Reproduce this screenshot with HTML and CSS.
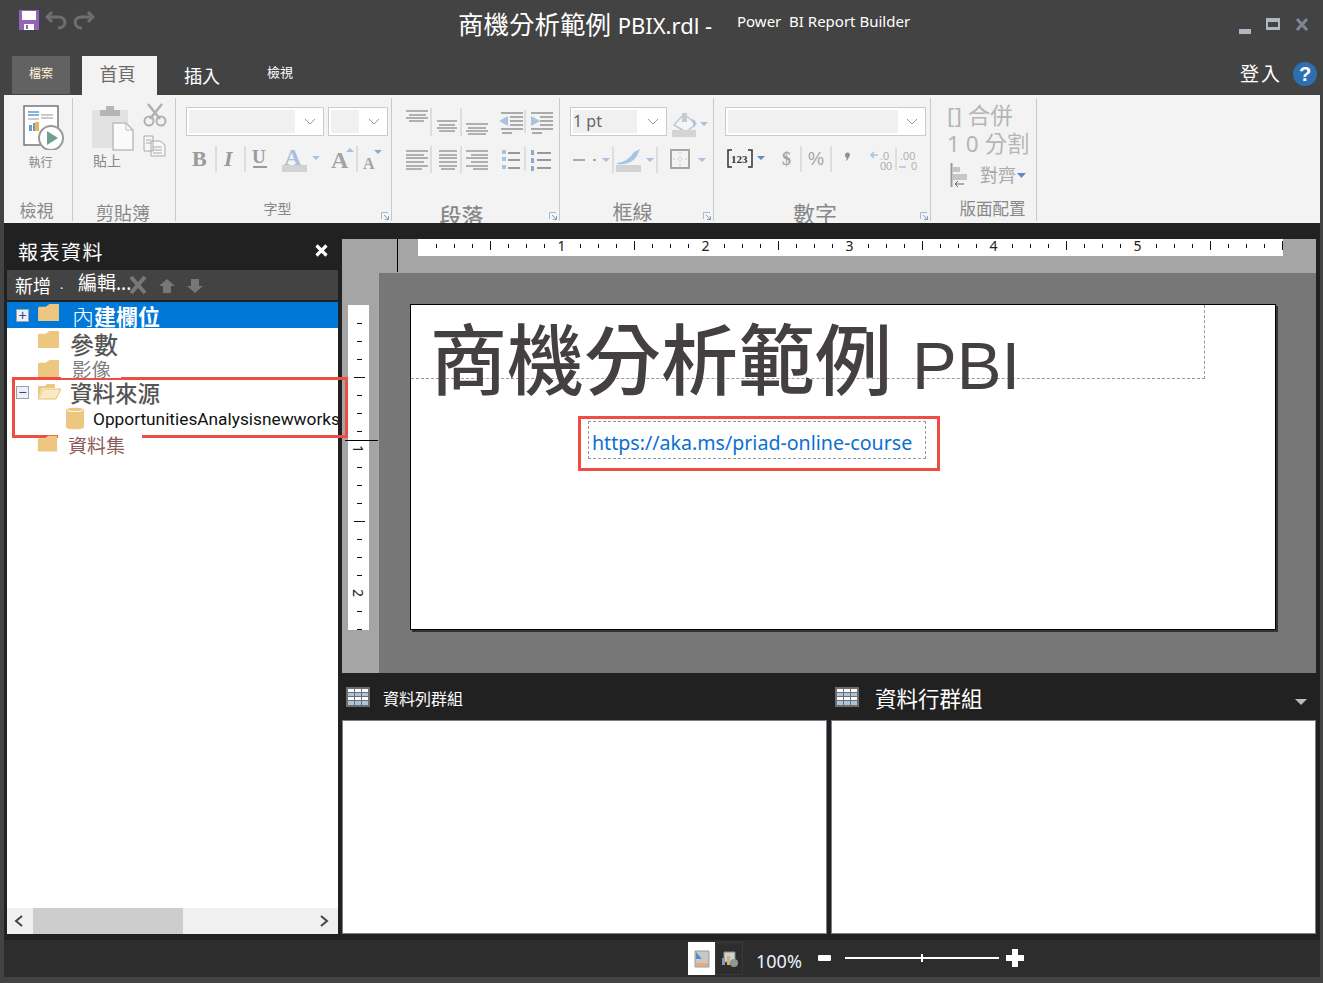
FILE: index.html
```html
<!DOCTYPE html>
<html lang="zh-Hant">
<head>
    <meta charset="UTF-8">
    <title>Power BI Report Builder</title>
    <link rel="stylesheet" href="styles.css">
</head>
<body>
<svg class="defs" width="0" height="0">
    <symbol id="folder" viewBox="0 0 24 20">
        <path d="M1 5 L1 19 L23 19 L23 1 L13 1 L9 4 L2 4 Z" fill="#edc680"/>
    </symbol>
    <symbol id="launcher" viewBox="0 0 8 8">
        <path d="M0.5 7 V0.5 H7" fill="none" stroke="#a9b9cc"/>
        <path d="M3 3 L7.5 7.5 M7.5 4 V7.5 H4" fill="none" stroke="#7f9fc4"/>
    </symbol>
    <symbol id="table" viewBox="0 0 24 20">
        <rect width="24" height="20" fill="#6d6d6d"/>
        <path d="M2 2h6v3H2zM9 2h6v3H9zM16 2h6v3h-6zM2 10h6v3H2zM9 10h6v3H9zM16 10h6v3h-6z" fill="#fff"/>
        <path d="M2 6h6v3H2zM9 6h6v3H9zM16 6h6v3h-6zM2 14h6v4H2zM9 14h6v4H9zM16 14h6v4h-6z" fill="#a9c6e0"/>
    </symbol>
</svg>
<div class="app">
    <header class="titlebar">
        <div class="quick">
            <svg width="20" height="20" viewBox="0 0 20 20"><path d="M0 0H20V20H0Z" fill="#9563b5"/><path d="M3 1H17V10H3Z" fill="#fff"/><path d="M5 14H15V20H5Z" fill="#fff"/><path d="M7 15H9V19H7Z" fill="#9563b5"/></svg>
            <svg width="22" height="20" viewBox="0 0 22 20"><path d="M7 2 L2 7 L7 12 M2 7 H14 C22 7 22 18 13 18" fill="none" stroke="#6e6e6e" stroke-width="3"/></svg>
            <svg width="22" height="20" viewBox="0 0 22 20"><path d="M15 2 L20 7 L15 12 M20 7 H8 C0 7 0 18 9 18" fill="none" stroke="#6e6e6e" stroke-width="3"/></svg>
        </div>
        <div class="title"><span class="doc-name">商機分析範例 <span class="doc-latin">PBIX.rdl -</span></span><span class="app-name">Power&nbsp; BI Report Builder</span></div>
        <div class="win-btns">
            <span class="win-min"></span>
            <span class="win-max"></span>
            <svg width="14" height="13" viewBox="0 0 14 13"><path d="M2 1 L12 12 M12 1 L2 12" stroke="#7d8794" stroke-width="3"/></svg>
        </div>
    </header>
    <nav class="tabs">
        <a class="tab tab-file">檔案</a>
        <a class="tab tab-home">首頁</a>
        <a class="tab tab-insert">插入</a>
        <a class="tab tab-view">檢視</a>
        <span class="signin">登入</span>
        <span class="help">?</span>
    </nav>
    <section class="ribbon">
        <div class="group g-view">
            <svg class="run-icon" width="46" height="46" viewBox="23 104 46 46">
                <rect x="24" y="106" width="34" height="39" fill="#fff" stroke="#777" stroke-width="1.500"/>
                <path d="M28 112H39M28 115H39" stroke="#5b9bd5" stroke-width="1.500"/>
                <path d="M41 115H53M41 118H53M28 119H39" stroke="#bbb" stroke-width="1.500"/>
                <path d="M29 131V125H32V131ZM33 131V123H36V131Z" fill="#6f9bc8"/>
                <path d="M35 131V122H39V131Z" fill="#e5b660"/>
                <circle cx="51" cy="138" r="12" fill="#fff" stroke="#9a9a9a" stroke-width="2"/>
                <path d="M47 131 L58 138 L47 145 Z" fill="#6fa08f"/>
            </svg>
            <span class="cmd-text">執行</span>
            <span class="group-label label-view">檢視</span>
        </div>
        <div class="group g-clip">
            <svg class="clip-icons" width="102" height="62" viewBox="73 100 102 62">
                <path d="M92 110H128V148H92Z" fill="#e2e2e2"/>
                <path d="M100 110H120V116H100ZM106 106H114V110H106Z" fill="#b5b5b5"/>
                <path d="M113 123H126L133 130V150H113Z" fill="#fafafa" stroke="#bdbdbd" stroke-width="1.500"/>
                <path d="M126 123V130H133" fill="none" stroke="#bdbdbd"/>
                <path d="M148 104 L160 119 M162 104 L150 119" stroke="#b0b0b0" stroke-width="2.500"/>
                <circle cx="149" cy="121" r="4.500" fill="none" stroke="#b0b0b0" stroke-width="2"/>
                <circle cx="161" cy="121" r="4.500" fill="none" stroke="#b0b0b0" stroke-width="2"/>
                <path d="M144 136H153V151H144ZM151 141H160L165 145V156H151Z" fill="#f7f7f7" stroke="#aaa"/>
                <path d="M146 140H151M146 143H151M153 147H162M153 150H162M153 153H162" stroke="#aaa"/>
            </svg>
            <span class="cmd-text paste-text">貼上</span>
            <span class="group-label label-clip">剪貼簿</span>
        </div>
        <div class="group g-font">
            <div class="combo-row">
                <div class="combo combo-font"><div class="combo-fill"></div><svg class="chev" width="12" height="7" viewBox="0 0 12 7"><path d="M1 1 L6 6 L11 1" fill="none" stroke="#999"/></svg></div>
                <div class="combo combo-size"><div class="combo-fill"></div><svg class="chev" width="12" height="7" viewBox="0 0 12 7"><path d="M1 1 L6 6 L11 1" fill="none" stroke="#999"/></svg></div>
            </div>
            <svg class="icon-row" width="215" height="32" viewBox="176 143 215 32">
                <text x="192" y="166" class="ico-serif" font-size="22" fill="#9a9a9a">B</text>
                <path d="M216 146V172M245 146V172M357 146V172" stroke="#c8c8c8"/>
                <text x="224" y="166" class="ico-serif ico-italic" font-size="22" fill="#9a9a9a">I</text>
                <text x="252" y="163" class="ico-serif" font-size="19" fill="#9a9a9a">U</text>
                <path d="M253 167H267" stroke="#9a9a9a" stroke-width="2"/>
                <text x="284" y="165" class="ico-serif" font-size="24" fill="#a9bfdc">A</text>
                <path d="M282 165H307V172H282Z" fill="#d2d2d2"/>
                <path d="M312 156H320L316 160Z" fill="#a9c0df"/>
                <text x="331" y="168" class="ico-serif" font-size="24" fill="#a3a3a3">A</text>
                <path d="M346 152L350 148L354 152Z" fill="#a9c0df"/>
                <text x="363" y="169" class="ico-serif" font-size="16" fill="#a3a3a3">A</text>
                <path d="M374 150H382L378 154Z" fill="#8da9d0"/>
            </svg>
            <span class="group-label label-font">字型</span>
            <svg class="launcher" width="8" height="8"><use href="#launcher"/></svg>
        </div>
        <div class="group g-para">
            <svg class="icon-row para-icons" width="167" height="76" viewBox="392 103 167 76" stroke="#b0b0b0" stroke-width="2">
                <path d="M406 111H428M409 115H426M406 118H428M409 121H424"/>
                <path d="M437 121H457M439 125H455M437 128H457M439 131H455"/>
                <path d="M466 124H488M468 128H486M466 131H488M468 134H486"/>
                <path d="M431 108V136M461 108V136M525 110V133" stroke="#c8c8c8" stroke-width="1"/>
                <path d="M501 113H523M510 117H523M510 121H523M510 125H523M501 129H523M502 133H512" stroke="#aaa"/>
                <path d="M508 117 L501 121 L508 125" fill="#a9c3e3" stroke="#a9c3e3"/>
                <path d="M531 113H553M540 117H553M540 121H553M540 125H553M531 129H553M532 133H542" stroke="#aaa"/>
                <path d="M531 117 L538 121 L531 125" fill="#a9c3e3" stroke="#a9c3e3"/>
                <path d="M406 151H428M406 155H424M406 158H428M406 162H424M406 166H428M406 169H422"/>
                <path d="M439 151H457M439 155H457M439 158H457M439 162H457M439 166H457M441 169H455"/>
                <path d="M466 151H488M471 155H488M466 158H488M471 162H488M466 166H488M473 169H488"/>
                <path d="M431 146V173M461 146V173M525 147V171" stroke="#c8c8c8" stroke-width="1"/>
                <path d="M508 153H520M508 160H520M508 168H520" stroke="#999"/>
                <path d="M502 150h4v4h-4zM502 157h4v4h-4zM502 165h4v4h-4z" fill="#a9c3e3" stroke="none"/>
                <path d="M537 153H551M537 160H551M537 168H551" stroke="#999"/>
                <path d="M531 150h3v5h-3zM531 158h3v5h-3zM531 166h3v5h-3z" fill="#8da9d0" stroke="none"/>
            </svg>
            <span class="group-label label-para">段落</span>
            <svg class="launcher" width="8" height="8"><use href="#launcher"/></svg>
        </div>
        <div class="group g-border">
            <div class="combo-row">
                <div class="combo combo-pt"><div class="combo-fill pt-fill">1 pt</div><svg class="chev" width="12" height="7" viewBox="0 0 12 7"><path d="M1 1 L6 6 L11 1" fill="none" stroke="#999"/></svg></div>
                <svg width="40" height="30" viewBox="668 105 40 30">
                    <path d="M672 123 L682 112 L694 122 L684 130 Z" fill="#f5f5f5" stroke="#bcc9da" stroke-width="1.500"/>
                    <path d="M680 111H685V120H680Z" fill="#c9c9c9"/>
                    <path d="M690 117 Q696 118 692 126 Z" fill="#a9c3e3"/>
                    <path d="M668 128H692V135H668Z" fill="#d4d4d4" transform="translate(2 0)"/>
                    <path d="M698 120H706L702 124Z" fill="#a9c0df"/>
                </svg>
            </div>
            <svg class="icon-row" width="153" height="38" viewBox="560 142 153 38">
                <path d="M573 160H585" stroke="#aaa" stroke-width="2"/>
                <path d="M593 160H596" stroke="#aaa" stroke-width="2"/>
                <path d="M602 158H610L606 162Z" fill="#a9c0df"/>
                <path d="M613 147V173M657 147V173" stroke="#c8c8c8"/>
                <path d="M617 163 Q628 162 634 152 L640 149 L637 156 Q630 166 617 164 Z" fill="#a9c3e3"/>
                <path d="M616 165H641V172H616Z" fill="#d2d2d2"/>
                <path d="M646 158H654L650 162Z" fill="#a9c0df"/>
                <rect x="671" y="150" width="18" height="18" fill="none" stroke="#a5a5a5" stroke-width="2"/>
                <path d="M680 152V167M673 159H688" stroke="#ccc" stroke-dasharray="2 2"/>
                <path d="M698 158H706L702 162Z" fill="#a9c0df"/>
            </svg>
            <span class="group-label label-border">框線</span>
            <svg class="launcher" width="8" height="8"><use href="#launcher"/></svg>
        </div>
        <div class="group g-num">
            <div class="combo-row">
                <div class="combo combo-num"><div class="combo-fill"></div><svg class="chev" width="12" height="7" viewBox="0 0 12 7"><path d="M1 1 L6 6 L11 1" fill="none" stroke="#999"/></svg></div>
            </div>
            <svg class="icon-row" width="216" height="32" viewBox="714 143 216 32">
                <path d="M732 150H728V167H732M748 150H752V167H748" fill="none" stroke="#333" stroke-width="1.500"/>
                <text x="731" y="163" class="ico-serif" font-size="11" fill="#333">123</text>
                <path d="M757 156H765L761 160Z" fill="#5f8cc4"/>
                <text x="782" y="165" class="ico-serif" font-size="18" fill="#a3a3a3">$</text>
                <path d="M801 146V172M831 146V172M896 148V170" stroke="#c8c8c8"/>
                <text x="808" y="165" class="ico-sans" font-size="18" fill="#a3a3a3">%</text>
                <path d="M845 155a2.500 2.500 0 1 1 4 2 q-1 3 -3.500 4 q1.500 -2 1 -3.500 q-1.500 0 -1.500 -2.500Z" fill="#8f8f8f"/>
                <path d="M871 155H878M874 152L871 155L874 158" fill="none" stroke="#a9c3e3" stroke-width="1.500"/>
                <text x="880" y="160" class="ico-sans" font-size="11" fill="#b0b0b0">.0</text>
                <text x="880" y="170" class="ico-sans" font-size="11" fill="#b0b0b0">00</text>
                <text x="900" y="160" class="ico-sans" font-size="11" fill="#b0b0b0">.00</text>
                <text x="911" y="170" class="ico-sans" font-size="11" fill="#b0b0b0">0</text>
                <path d="M899 167H906" stroke="#a9c3e3" stroke-width="1.500"/>
            </svg>
            <span class="group-label label-num">數字</span>
            <svg class="launcher" width="8" height="8"><use href="#launcher"/></svg>
        </div>
        <div class="group g-layout">
            <span class="layout-line line-merge">[] 合併</span>
            <span class="layout-line line-split">1 0 分割</span>
            <div class="layout-align">
                <svg width="18" height="26" viewBox="0 0 18 26"><path d="M1.500 1V25" stroke="#999" stroke-width="2"/><path d="M3 5H10V10H3ZM3 12H17V18H3Z" fill="#c6c6c6"/><path d="M14 22H5M8 19L5 22L8 25" fill="none" stroke="#666"/></svg>
                <span>對齊</span>
                <svg width="9" height="5" viewBox="0 0 9 5"><path d="M0 0H9L4.500 5Z" fill="#5f8cc4"/></svg>
            </div>
            <span class="group-label label-layout">版面配置</span>
        </div>
    </section>
    <main class="workspace">
        <aside class="report-data">
            <div class="pane-head">
                <span>報表資料</span>
                <svg width="13" height="13" viewBox="0 0 13 13"><path d="M1.500 1.500 L11.500 11.500 M11.500 1.500 L1.500 11.500" stroke="#fff" stroke-width="3.200"/></svg>
            </div>
            <div class="pane-tools">
                <span class="tool-new">新增</span><span class="tool-dot">.</span>
                <span class="tool-edit">編輯...</span>
                <svg width="20" height="20" viewBox="0 0 20 20"><path d="M3 2 L17 18 M17 2 L3 18" stroke="#787878" stroke-width="4"/></svg>
                <svg class="tool-up" width="16" height="15" viewBox="0 0 16 15"><path d="M8 1 L16 8 H12 V15 H4 V8 H0 Z" fill="#777"/></svg>
                <svg class="tool-down" width="16" height="15" viewBox="0 0 16 15"><path d="M8 15 L16 8 H12 V1 H4 V8 H0 Z" fill="#777"/></svg>
            </div>
            <div class="tree">
                <div class="row row-builtin">
                    <span class="toggle">+</span>
                    <svg class="folder" width="23" height="19"><use href="#folder"/></svg>
                    <span class="row-text"><span class="thin">內</span>建欄位</span>
                </div>
                <div class="row row-param">
                    <svg class="folder" width="23" height="19"><use href="#folder"/></svg>
                    <span class="row-text">參數</span>
                </div>
                <div class="row row-image">
                    <svg class="folder" width="23" height="19"><use href="#folder"/></svg>
                    <span class="row-text">影像</span>
                </div>
                <div class="row row-source">
                    <span class="toggle">−</span>
                    <svg class="folder" width="24" height="17" viewBox="0 0 24 17"><path d="M1 3H8L10 1H18V5H5L1 15Z" fill="#edc680"/><path d="M1 16L6 6H24L19 16Z" fill="#fbe9c4" stroke="#e8c27c"/></svg>
                    <span class="row-text">資料來源</span>
                </div>
                <div class="row row-conn">
                    <svg width="18" height="23" viewBox="0 0 18 23"><path d="M0 3C0 0 18 0 18 3V20C18 23 0 23 0 20Z" fill="#edc680"/><path d="M1 3C3 5 15 5 17 3" fill="none" stroke="#fff"/></svg>
                    <span class="row-text">OpportunitiesAnalysisnewworkspace</span>
                </div>
                <div class="row row-set">
                    <svg class="folder" width="21" height="19"><use href="#folder"/></svg>
                    <span class="row-text">資料集</span>
                </div>
            </div>
            <div class="hscroll">
                <svg width="10" height="12" viewBox="0 0 10 12"><path d="M8 1 L2 6 L8 11" fill="none" stroke="#444" stroke-width="2"/></svg>
                <div class="thumb"></div>
                <svg class="hscroll-right" width="10" height="12" viewBox="0 0 10 12"><path d="M2 1 L8 6 L2 11" fill="none" stroke="#444" stroke-width="2"/></svg>
            </div>
        </aside>
        <div class="design">
            <div class="designer">
                <div class="corner"></div>
                <div class="hruler-wrap">
                    <div class="hruler">
                        <span>1</span><span>2</span><span>3</span><span>4</span><span>5</span>
                    </div>
                </div>
                <div class="vruler-wrap">
                    <div class="vruler">
                        <span>1</span><span>2</span>
                    </div>
                </div>
                <div class="canvas">
                    <div class="page">
                        <div class="report-title">商機分析範例 <span class="title-latin">PBI</span></div>
                        <div class="report-link">https://aka.ms/priad-online-course</div>
                        <div class="callout callout-link"></div>
                    </div>
                </div>
                <div class="guide guide-v"></div>
                <div class="guide guide-h"></div>
            </div>
            <div class="group-heads">
                <div class="group-head head-row">
                    <svg width="24" height="20"><use href="#table"/></svg>
                    <span>資料列群組</span>
                </div>
                <div class="group-head head-col">
                    <svg width="24" height="20"><use href="#table"/></svg>
                    <span>資料行群組</span>
                    <svg class="head-arrow" width="12" height="6" viewBox="0 0 12 6"><path d="M0 0H12L6 6Z" fill="#bbb"/></svg>
                </div>
            </div>
            <div class="group-panels">
                <div class="group-panel panel-row"></div>
                <div class="group-panel"></div>
            </div>
        </div>
        <div class="callout callout-tree"></div>
    </main>
    <footer class="statusbar">
        <div class="view-btn view-on">
            <svg width="16" height="18" viewBox="0 0 16 18"><path d="M1 1H15V17H1Z" fill="#c8c8c8" stroke="#999"/><path d="M2 2L8 9H2Z" fill="#4f90d0"/><path d="M2 13H14V16H2Z" fill="#eda96c"/></svg>
        </div>
        <div class="view-btn">
            <svg width="17" height="16" viewBox="0 0 17 16"><path d="M3 1H14V11H3Z" fill="#d0d0d0" stroke="#888"/><path d="M1 7H4V14H1Z" fill="#7a9cc6"/><path d="M6 5H9V14H6Z" fill="#d7b06c"/><circle cx="13" cy="12" r="4" fill="#8a9a92"/></svg>
        </div>
        <span class="zoom-val">100%</span>
        <span class="zoom-minus"></span>
        <div class="zoom-track"><span class="zoom-tick"></span></div>
        <svg class="zoom-plus" width="18" height="18" viewBox="0 0 18 18"><path d="M6 0H12V6H18V12H12V18H6V12H0V6H6Z" fill="#fff"/></svg>
    </footer>
</div>
</body>
</html>
```

FILE: styles.css
```css
* {
    box-sizing: border-box;
}
body {
    margin: 0;
    font-family: 'Noto Sans', 'Noto Sans CJK TC', sans-serif;
    background-color: #434343;
    overflow: hidden;
}
.defs {
    position: absolute;
}
svg {
    display: block;
    flex: none;
}
.app {
    width: 1323px;
    height: 983px;
    display: flex;
    flex-direction: column;
    background-color: #434343;
}

/* title bar */
.titlebar {
    height: 56px;
    display: flex;
    align-items: flex-start;
}
.quick {
    display: flex;
    gap: 6px;
    padding: 10px 0 0 19px;
    width: 458px;
}
.title {
    display: flex;
    color: #fff;
    white-space: nowrap;
}
.doc-name {
    font-size: 25.500px;
    line-height: 48px;
    width: 279px;
}
.doc-latin {
    font-size: 22px;
}
.app-name {
    font-size: 15px;
    line-height: 42px;
}
.win-btns {
    margin-left: auto;
    display: flex;
    gap: 15px;
    padding: 18px 14px 0 0;
}
.win-min {
    width: 12px;
    height: 5px;
    margin-top: 11px;
    background-color: #aeb8c5;
}
.win-max {
    width: 14px;
    height: 12px;
    border: 2px solid #aeb8c5;
    border-top-width: 4px;
    border-bottom-width: 3px;
    background-color: #434343;
}

/* tabs */
.tabs {
    height: 39px;
    display: flex;
    align-items: flex-start;
    padding-left: 12px;
    color: #fff;
}
.tab {
    display: block;
    text-align: center;
}
.tab-file {
    width: 58px;
    height: 38px;
    background-color: #626262;
    color: #fff3d8;
    font-size: 12px;
    line-height: 36px;
}
.tab-home {
    width: 75px;
    height: 39px;
    margin-left: 12px;
    padding-right: 4px;
    background-color: #f3f3f3;
    color: #6b6b6b;
    font-size: 18px;
    line-height: 37px;
}
.tab-insert {
    width: 60px;
    margin-left: 15px;
    font-size: 18px;
    line-height: 40px;
}
.tab-view {
    width: 40px;
    margin-left: 28px;
    font-size: 13px;
    line-height: 32px;
}
.signin {
    margin-left: auto;
    font-size: 19px;
    letter-spacing: 2px;
    line-height: 36px;
}
.help {
    width: 24px;
    height: 24px;
    margin: 6px 6px 0 11px;
    border-radius: 50%;
    background-color: #2e6fb0;
    font: bold 20px/24px 'Liberation Sans', sans-serif;
    text-align: center;
}

/* ribbon */
.ribbon {
    height: 128px;
    margin: 0 3px 0 4px;
    display: flex;
    background-color: #f3f3f3;
}
.group {
    position: relative;
    display: flex;
    flex-direction: column;
    height: 123px;
    margin-top: 3px;
    border-right: 1px solid #c9c9c9;
    color: #888;
}
.g-view { width: 69px; }
.g-clip { width: 103px; }
.g-font { width: 216px; }
.g-para { width: 168px; }
.g-border { width: 154px; }
.g-num { width: 217px; }
.g-layout { width: 106px; }
.group-label {
    position: absolute;
    left: 0;
    right: 0;
    text-align: center;
    white-space: nowrap;
}
.label-view { font-size: 17px; bottom: -1px; padding-right: 3px; }
.label-clip { font-size: 18px; bottom: -4px; padding-right: 2px; }
.label-font { font-size: 14px; bottom: 3px; padding-right: 12px; }
.label-para { font-size: 22px; bottom: -9px; font-weight: 500; padding-right: 28px; }
.label-border { font-size: 20px; bottom: -5px; padding-right: 8px; }
.label-num { font-size: 22px; bottom: -7px; padding-right: 14px; }
.label-layout { font-size: 16.500px; bottom: 1px; padding-left: 18px; }
.launcher {
    position: absolute;
    right: 2px;
    bottom: 1px;
}
.run-icon {
    margin: 6px 0 0 19px;
}
.cmd-text {
    font-size: 12px;
    text-align: center;
    padding-left: 5px;
    margin-top: 3px;
}
.clip-icons {
    margin-top: 2px;
}
.paste-text {
    font-size: 14px;
    text-align: left;
    padding-left: 20px;
    margin-top: -12px;
}
.combo-row {
    display: flex;
    gap: 4px;
    padding: 9px 0 0 10px;
}
.combo {
    height: 29px;
    display: flex;
    align-items: center;
    justify-content: space-between;
    padding: 2px 7px 2px 2px;
    background-color: #fff;
    border: 1px solid #cbcbcb;
}
.combo-fill {
    height: 23px;
    background-color: #f0f0f0;
}
.combo-font { width: 138px; }
.combo-font .combo-fill { width: 106px; }
.combo-size { width: 60px; }
.combo-size .combo-fill { width: 28px; }
.combo-pt { width: 97px; }
.combo-pt .combo-fill {
    width: 64px;
    color: #666;
    font-size: 16px;
    line-height: 23px;
}
.g-border .combo-row {
    align-items: flex-start;
    gap: 3px;
}
.combo-num { width: 201px; }
.combo-num .combo-fill { width: 170px; }
.g-num .combo-row { padding-left: 11px; }
.icon-row {
    margin-top: 7px;
}
.para-icons {
    margin-top: 5px;
}
.g-border .icon-row {
    margin-top: 5px;
}
.ico-serif {
    font-family: 'Liberation Serif', serif;
    font-weight: bold;
}
.ico-italic {
    font-style: italic;
}
.ico-sans {
    font-family: 'Liberation Sans', sans-serif;
}
.layout-line {
    padding-left: 16px;
    color: #b5b5b5;
    font-size: 22.500px;
    line-height: 28px;
    white-space: nowrap;
}
.line-merge {
    margin-top: 4px;
}
.layout-align {
    display: flex;
    align-items: center;
    gap: 12px;
    padding: 4px 0 0 19px;
    color: #aaa;
    font-size: 18px;
    line-height: 22px;
}
.layout-align span {
    margin-right: -11px;
}

/* workspace */
.workspace {
    position: relative;
    flex: 1;
    display: flex;
    margin: 0 3px 0 4px;
    padding-left: 3px;
    background-color: #212121;
}
.report-data {
    width: 331px;
    display: flex;
    flex-direction: column;
    padding-bottom: 6px;
}
.pane-head {
    height: 47px;
    display: flex;
    justify-content: space-between;
    padding: 16px 10px 0 11px;
    color: #fff;
    font-size: 20px;
    letter-spacing: 1.500px;
    line-height: 28px;
}
.pane-head svg {
    margin-top: 5px;
}
.pane-tools {
    height: 30px;
    display: flex;
    align-items: center;
    padding-left: 8px;
    background-color: #434343;
    color: #fff;
    font-size: 18px;
    line-height: 24px;
    white-space: nowrap;
}
.tool-new {
    margin-top: 1px;
}
.tool-dot {
    width: 27px;
    padding-left: 9px;
    font-size: 12px;
}
.tool-edit {
    margin-top: -4px;
    font-size: 19px;
    width: 50px;
}
.tool-up {
    margin-left: 11px;
}
.tool-down {
    margin-left: 12px;
}
.tree {
    flex: 1;
    margin-top: 2px;
    background-color: #fff;
    overflow: hidden;
}
.row {
    display: flex;
    align-items: center;
    white-space: nowrap;
}
.toggle {
    width: 13px;
    height: 13px;
    margin-left: 9px;
    border: 1px solid #9aa2ad;
    background-color: #eef0f4;
    color: #234b88;
    font: 14px/10px 'Liberation Sans', sans-serif;
    text-align: center;
}
.row-builtin {
    height: 26px;
    background-color: #0078d7;
    color: #fff;
    font-size: 22px;
    font-weight: 700;
    line-height: 24px;
}
.row-builtin .folder {
    margin: -6px 0 0 8px;
}
.row-builtin .row-text {
    margin: 2px 0 0 12px;
}
.thin {
    font-weight: 300;
}
.row-param {
    height: 30px;
    padding-left: 30px;
    color: #555;
    font-size: 24px;
    font-weight: 500;
    line-height: 26px;
}
.row-param .folder {
    margin-top: -8px;
}
.row-param .row-text {
    margin: 4px 0 0 10px;
}
.row-image {
    position: relative;
    z-index: 1;
    height: 21px;
    padding-left: 30px;
    color: #808080;
    font-size: 19.500px;
}
.row-image .row-text {
    height: 19px;
    margin-left: 1px;
    padding: 0 10px 0 11px;
    background-color: #fff;
    line-height: 21px;
}
.row-source {
    height: 27px;
    color: #555;
    font-size: 22.500px;
    font-weight: 500;
    line-height: 25px;
}
.row-source .folder {
    margin: -3px 0 0 8px;
}
.row-source .row-text {
    margin: 2px 0 0 9px;
}
.row-conn {
    height: 25px;
    padding-left: 59px;
    color: #111;
    font-family: 'Roboto', sans-serif;
    font-size: 17.300px;
    line-height: 22px;
}
.row-conn .row-text {
    margin-left: 9px;
}
.row-set {
    position: relative;
    z-index: 1;
    height: 24px;
    margin-top: 3px;
    padding-left: 30px;
    color: #8a5a5a;
    font-size: 19px;
}
.row-set .folder {
    margin-top: -6px;
}
.row-set .row-text {
    padding: 0 17px 0 10px;
    background-color: #fff;
    line-height: 24px;
}
.hscroll {
    height: 26px;
    display: flex;
    align-items: center;
    padding-left: 7px;
    background-color: #f0f0f0;
}
.thumb {
    width: 150px;
    height: 100%;
    margin-left: 9px;
    background-color: #cdcdcd;
}
.hscroll-right {
    margin-left: auto;
    margin-right: 9px;
}

/* design surface */
.design {
    width: 974px;
    margin-left: 4px;
    padding: 16px 0 6px;
    display: flex;
    flex-direction: column;
}
.designer {
    position: relative;
    height: 434px;
    display: grid;
    grid-template-columns: 37px 1fr;
    grid-template-rows: 34px 1fr;
    background-color: #a5a5a5;
}
.hruler-wrap {
    padding-left: 39px;
}
.hruler {
    width: 865px;
    height: 17px;
    display: flex;
    padding-left: 139px;
    gap: 135px;
    font: 14px/13px 'Noto Sans', sans-serif;
    color: #222;
    background-color: #fff;
    background-image:
        repeating-linear-gradient(90deg, transparent 0 71px, #111 71px 72px),
        repeating-linear-gradient(90deg, transparent 0 17px, #111 17px 18px);
    background-size: 865px 9px, 865px 4px;
    background-position: 1px 2px, 1px 5px;
    background-repeat: no-repeat;
}
.hruler span {
    width: 9px;
    background-color: #fff;
    text-align: center;
}
.vruler-wrap {
    padding: 32px 0 0 6px;
}
.vruler {
    width: 21px;
    height: 325px;
    display: flex;
    flex-direction: column;
    align-items: center;
    padding-top: 138px;
    gap: 132px;
    font: 14px/14px 'Noto Sans', sans-serif;
    color: #222;
    background-color: #fff;
    background-image:
        repeating-linear-gradient(180deg, transparent 0 71px, #111 71px 72px),
        repeating-linear-gradient(180deg, transparent 0 17px, #111 17px 18px);
    background-size: 11px 325px, 5px 325px;
    background-position: 6px 1px, 9px 1px;
    background-repeat: no-repeat;
}
.vruler span {
    width: 12px;
    height: 12px;
    background-color: #fff;
    transform: rotate(90deg);
    text-align: center;
}
.canvas {
    padding: 31px 0 0 31px;
    background-color: #777;
}
.page {
    position: relative;
    width: 866px;
    height: 326px;
    background-color: #fff;
    border: 1px solid #000;
    box-shadow: 2px 2px 0 #333;
}
.report-title {
    position: absolute;
    left: 0;
    top: 0;
    width: 794px;
    height: 74px;
    padding-left: 19px;
    border-right: 1px dashed #999;
    border-bottom: 1px dashed #999;
    color: #443f42;
    font-size: 77px;
    font-weight: 500;
    line-height: 110px;
    white-space: nowrap;
}
.title-latin {
    font-family: 'Liberation Sans', sans-serif;
    font-size: 67px;
    font-weight: 400;
}
.report-link {
    position: absolute;
    left: 177px;
    top: 116px;
    width: 338px;
    height: 38px;
    padding-left: 3px;
    border: 1px dashed #999;
    color: #0b6fd0;
    font-size: 19.600px;
    line-height: 42px;
    white-space: nowrap;
}
.callout {
    position: absolute;
    border: 3px solid #ef4c45;
    pointer-events: none;
}
.callout-link {
    left: 167px;
    top: 111px;
    width: 362px;
    height: 55px;
}
.callout-tree {
    left: 8px;
    top: 154px;
    width: 336px;
    height: 61px;
}
.guide {
    position: absolute;
    background-color: #000;
}
.guide-v {
    left: 55px;
    top: 0;
    width: 1px;
    height: 33px;
}
.guide-h {
    left: 3px;
    top: 201px;
    width: 33px;
    height: 1px;
}
.group-heads {
    height: 47px;
    display: flex;
    color: #fff;
    font-size: 16px;
}
.group-head {
    display: flex;
    align-items: flex-start;
    padding-top: 14px;
}
.group-head span {
    margin-top: 1px;
    line-height: 22px;
}
.head-row {
    width: 490px;
    padding-left: 4px;
    gap: 13px;
}
.head-col {
    flex: 1;
    gap: 16px;
    padding-left: 3px;
    font-size: 21.500px;
}
.head-arrow {
    margin: 12px 9px 0 auto;
}
.group-panels {
    flex: 1;
    display: flex;
    gap: 4px;
}
.group-panel {
    flex: 1;
    background-color: #fff;
    border: 1px solid #7a7f8a;
}
.panel-row {
    flex: none;
    width: 485px;
}

/* status bar */
.statusbar {
    height: 37px;
    margin: 0 3px 6px 4px;
    display: flex;
    align-items: center;
    padding-left: 684px;
    background-color: #2d2d2d;
    color: #eaf2ff;
}
.view-btn {
    width: 28px;
    height: 33px;
    display: flex;
    align-items: center;
    justify-content: center;
    border: 1px solid #3a3a3a;
}
.view-on {
    width: 27px;
    border: none;
    background-color: #fff;
}
.zoom-val {
    margin: 5px 0 0 13px;
    width: 62px;
    font-size: 18px;
}
.zoom-minus {
    width: 13px;
    height: 6px;
    margin-top: -2px;
    background-color: #fff;
    border-radius: 1px;
}
.zoom-track {
    position: relative;
    width: 154px;
    height: 2px;
    margin: -2px 0 0 14px;
    background-color: #fff;
}
.zoom-tick {
    position: absolute;
    left: 76px;
    top: -3px;
    width: 2px;
    height: 8px;
    background-color: #fff;
}
.zoom-plus {
    margin: -2px 0 0 7px;
}
```
